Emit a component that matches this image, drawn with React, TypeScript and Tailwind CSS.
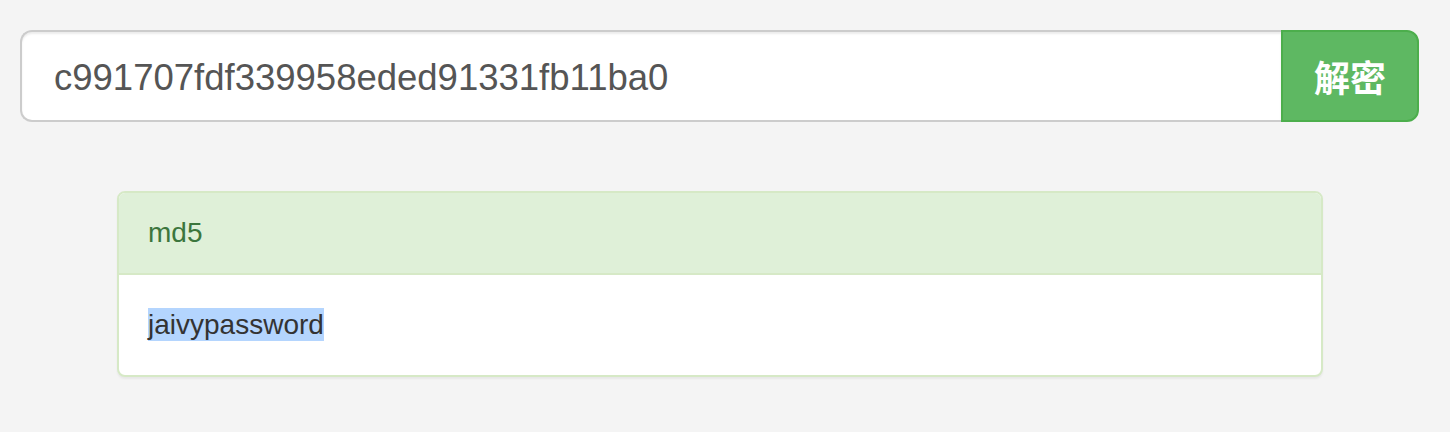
export default function App() {
  return (
    <div className="min-h-[432px] w-full bg-[#f4f4f4] pl-[20px] pr-[31px] pt-[30px]" style={{ fontFamily: '"Liberation Sans", Arial, "Noto Sans CJK SC", sans-serif' }}>
      <div className="flex h-[92px]">
        <div className="flex flex-1 items-center rounded-l-[12px] border-2 border-r-0 border-[#cccccc] bg-white px-[32px] pt-[4px] text-[36.5px] text-[#555555] shadow-[inset_0_2px_2px_rgba(0,0,0,0.075)]">
          c991707fdf339958eded91331fb11ba0
        </div>
        <button className="flex w-[138px] items-center justify-center rounded-r-[12px] border-2 border-[#4cae4c] bg-[#5eb862] text-[36px] font-bold text-white" style={{ fontFamily: '"Noto Sans CJK SC", sans-serif' }}>
          解密
        </button>
      </div>
      <div className="ml-[97px] mr-[96px] mt-[69px] overflow-hidden rounded-[8px] border-2 border-[#d6e9c6] bg-white shadow-[0_2px_2px_rgba(0,0,0,0.05)]">
        <div className="border-b-2 border-[#d6e9c6] bg-[#dff0d8] px-[29px] py-[20px] text-[28px] leading-[40px] text-[#3c763d]">
          md5
        </div>
        <div className="px-[29px] py-[30px] text-[28px] leading-[40px] text-[#333333]">
          <span className="bg-[#b4d5fe] py-[1px]">jaivypassword</span>
        </div>
      </div>
    </div>
  );
}
